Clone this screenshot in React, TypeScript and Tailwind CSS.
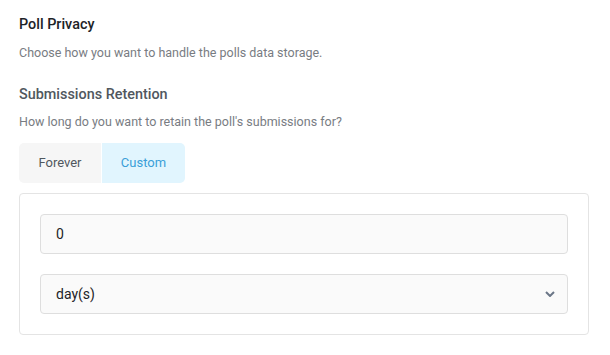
import { useState } from "react";

// ── Retention tabs ───────────────────────────────────────────────────────────

const MODES = ["Forever", "Custom"] as const;
type Mode = (typeof MODES)[number];

function ModeTabs({ mode, onMode }: { mode: Mode; onMode: (m: Mode) => void }) {
  return (
    <div className="flex w-fit rounded-[5px] overflow-hidden gap-px">
      {MODES.map(m => (
        <button
          key={m}
          onClick={() => onMode(m)}
          className={`h-10 text-[13px] ${
            m === "Forever" ? "w-[82px]" : "w-[83px]"
          } ${
            mode === m
              ? "bg-[#e1f5fe] text-[#3a9fd8]"
              : "bg-[#f6f6f6] text-[#50575e]"
          }`}
        >
          {m}
        </button>
      ))}
    </div>
  );
}

// ── Main ─────────────────────────────────────────────────────────────────────

export default function App() {
  const [mode, setMode] = useState<Mode>("Custom");
  const [value, setValue] = useState("0");
  const [unit, setUnit] = useState("day(s)");

  return (
    <div
      className="w-[610px] h-[355px] bg-white px-[19px] pt-[15px]"
      style={{ fontFamily: "Roboto, 'Liberation Sans', sans-serif" }}
    >
      <h2 className="text-[14.4px] font-medium text-[#1d2327] leading-[20px]">Poll Privacy</h2>
      <p className="mt-[10px] text-[12.5px] text-[#787c82] leading-[16px]">
        Choose how you want to handle the polls data storage.
      </p>

      <h3 className="mt-[24px] text-[14.4px] font-medium text-[#50575e] leading-[20px]">
        Submissions Retention
      </h3>
      <p className="mt-[9px] text-[12.5px] text-[#787c82] leading-[16px]">
        How long do you want to retain the poll's submissions for?
      </p>

      <div className="mt-[13px]">
        <ModeTabs mode={mode} onMode={setMode} />
      </div>

      {mode === "Custom" && (
        <div className="mt-[10px] w-[570px] rounded-[4px] border border-[#e4e4e4] p-5 flex flex-col gap-5">
          <input
            value={value}
            onChange={e => setValue(e.target.value)}
            className="h-[40px] w-full rounded-[4px] border border-[#dedede] bg-[#fafafa] px-[15px] text-[14px] text-[#1d2327] outline-none"
          />
          <div className="relative">
            <select
              value={unit}
              onChange={e => setUnit(e.target.value)}
              className="h-[40px] w-full appearance-none rounded-[4px] border border-[#dedede] bg-[#fafafa] px-[15px] text-[14px] text-[#1d2327] outline-none"
            >
              <option>day(s)</option>
              <option>week(s)</option>
              <option>month(s)</option>
              <option>year(s)</option>
            </select>
            {/* chevron */}
            <svg
              viewBox="0 0 10 6"
              className="pointer-events-none absolute right-[13px] top-1/2 -translate-y-1/2 w-[10px] h-[6px]"
              fill="none"
              stroke="#6b7687"
              strokeWidth="2"
            >
              <path d="M1 1l4 4 4-4" />
            </svg>
          </div>
        </div>
      )}
    </div>
  );
}
